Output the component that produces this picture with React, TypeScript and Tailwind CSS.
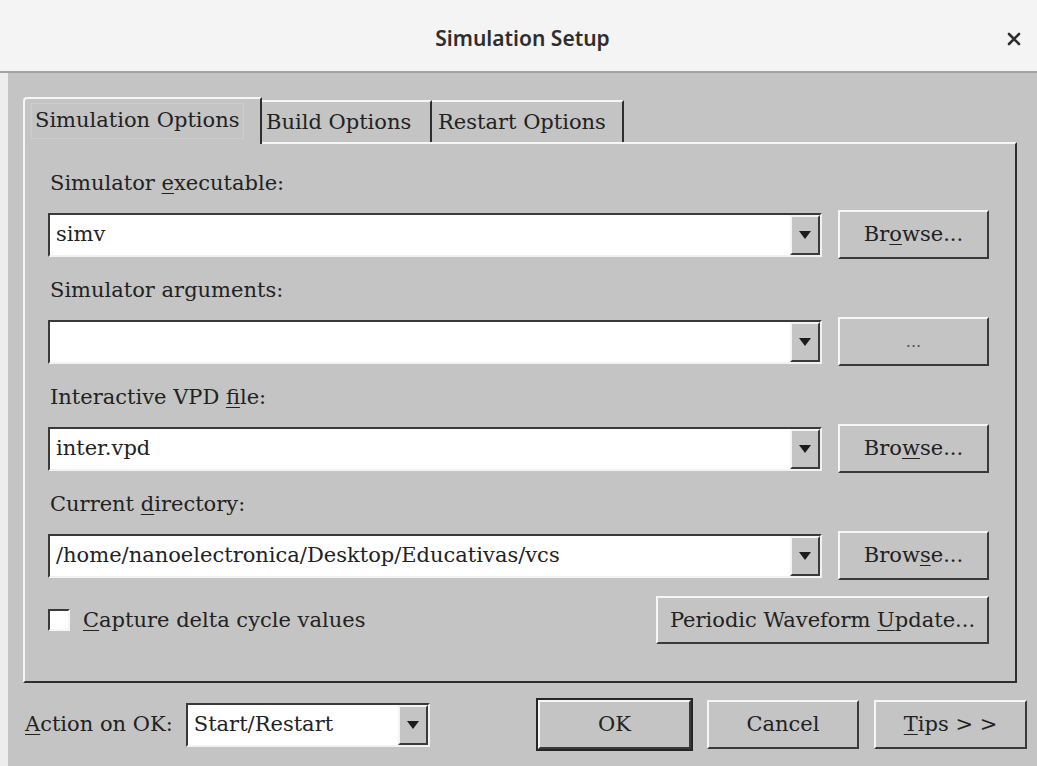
import React from "react";

const serif = "font-['DejaVu_Serif',serif] text-[21px] leading-none text-[#222]";

function Arrow() {
  return (
    <svg width="12" height="8" viewBox="0 0 12 8" aria-hidden>
      <path d="M0 0H12L6 8Z" fill="#1c1c1c" />
    </svg>
  );
}

function Combo({ value, className = "" }: { value: string; className?: string }) {
  return (
    <div
      className={`flex h-[44px] border-2 border-t-[#3a3a3a] border-l-[#3a3a3a] border-b-[#f2f2f2] border-r-[#f2f2f2] ${className}`}
    >
      <div className="flex flex-1 items-center bg-white pl-[6px] whitespace-nowrap overflow-hidden">
        {value}
      </div>
      <div className="flex w-[30px] items-center justify-center border-2 border-t-[#f4f4f4] border-l-[#f4f4f4] border-b-[#3a3a3a] border-r-[#3a3a3a] bg-[#c4c4c4]">
        <Arrow />
      </div>
    </div>
  );
}

function Button({
  children,
  className = "",
  isDefault = false,
}: {
  children: React.ReactNode;
  className?: string;
  isDefault?: boolean;
}) {
  const face = (
    <div className="flex h-full w-full items-center justify-center border-2 border-t-[#f6f6f6] border-l-[#f6f6f6] border-b-[#3a3a3a] border-r-[#3a3a3a] bg-[#c4c4c4]">
      {children}
    </div>
  );
  if (isDefault) {
    return <div className={`border-2 border-[#262626] ${className}`}>{face}</div>;
  }
  return <div className={className}>{face}</div>;
}

function U({ children }: { children: React.ReactNode }) {
  return <span className="underline underline-offset-[3px] decoration-1">{children}</span>;
}

function Field({
  label,
  value,
  action,
}: {
  label: React.ReactNode;
  value: string;
  action: React.ReactNode;
}) {
  return (
    <div className="flex flex-col">
      <div className="flex h-[30px] items-center pl-[2px]">{label}</div>
      <div className="mt-[12px] flex h-[49px] items-center gap-[16px]">
        <Combo value={value} className="flex-1" />
        <Button className="h-[49px] w-[151px]">{action}</Button>
      </div>
    </div>
  );
}

export default function App() {
  return (
    <div className={`flex h-[766px] w-[1037px] flex-col overflow-hidden bg-[#c4c4c4] ${serif}`}>
      {/* window title bar */}
      <div className="flex h-[73px] items-center border-b-2 border-[#a2a2a2] bg-[#f4f4f5] pt-[6px] font-['Noto_Sans',sans-serif] text-[#2e2e2e]">
        <div className="flex-1" />
        <div className="ml-[24px] text-[21px] font-semibold">Simulation Setup</div>
        <div className="flex flex-1 justify-end pr-[16px]">
          <svg width="14" height="14" viewBox="0 0 14 14" aria-hidden>
            <path d="M2 2L12 12M12 2L2 12" stroke="#2e2e2e" strokeWidth="2.6" strokeLinecap="round" />
          </svg>
        </div>
      </div>

      <div className="flex flex-1">
        <div className="w-[8px] bg-[#ededed]" />
        <div className="flex flex-1 flex-col pl-[15px] pt-[24px]">
          {/* tabs */}
          <div className="relative z-10 flex h-[47px] items-start">
            <div className="flex h-[47px] w-[239px] items-center rounded-tl-[4px] border-t-2 border-l-2 border-r-2 border-t-[#f6f6f6] border-l-[#f6f6f6] border-r-[#2e2e2e] bg-[#c4c4c4] px-[6px] pb-[2px]">
              <div className="flex h-[36px] items-center border border-dotted border-[#d6d6d6] px-[3px]">
                Simulation Options
              </div>
            </div>
            <div className="mt-[3px] flex h-[42px] w-[170px] items-center border-t-2 border-r-2 border-t-[#f6f6f6] border-r-[#2e2e2e] pl-[4px]">
              Build Options
            </div>
            <div className="mt-[3px] flex h-[42px] w-[192px] items-center border-t-2 border-r-2 border-t-[#f6f6f6] border-r-[#2e2e2e] pl-[6px]">
              Restart Options
            </div>
          </div>

          {/* tab page */}
          <div className="mr-[20px] -mt-[2px] flex h-[541px] flex-col border-2 border-t-[#f6f6f6] border-l-[#f6f6f6] border-b-[#2e2e2e] border-r-[#2e2e2e] pl-[23px] pr-[26px] pt-[24px]">
            <div className="flex flex-col gap-[16px]">
              <Field
                label={
                  <span>
                    Simulator <U>e</U>xecutable:
                  </span>
                }
                value="simv"
                action={
                  <span>
                    Br<U>o</U>wse...
                  </span>
                }
              />
              <Field
                label={<span>Simulator arguments:</span>}
                value=""
                action={<span className="text-[16px] text-[#555]">...</span>}
              />
              <Field
                label={
                  <span>
                    Interactive VPD <U>f</U>ile:
                  </span>
                }
                value="inter.vpd"
                action={
                  <span>
                    Bro<U>w</U>se...
                  </span>
                }
              />
              <Field
                label={
                  <span>
                    Current <U>d</U>irectory:
                  </span>
                }
                value="/home/nanoelectronica/Desktop/Educativas/vcs"
                action={
                  <span>
                    Brow<U>s</U>e...
                  </span>
                }
              />
            </div>

            <div className="mt-[16px] flex h-[48px] items-center">
              <div className="h-[22px] w-[22px] border-2 border-t-[#3a3a3a] border-l-[#3a3a3a] border-b-[#f6f6f6] border-r-[#f6f6f6] bg-white" />
              <span className="ml-[13px]">
                <U>C</U>apture delta cycle values
              </span>
              <div className="flex-1" />
              <Button className="h-[48px] w-[333px]">
                <span>
                  Periodic Waveform <U>U</U>pdate...
                </span>
              </Button>
            </div>
          </div>

          {/* dialog actions */}
          <div className="mr-[10px] flex flex-1 items-center">
            <span className="pl-[2px]">
              <U>A</U>ction on OK:
            </span>
            <Combo value="Start/Restart" className="ml-[13px] w-[244px]" />
            <div className="flex-1" />
            <Button isDefault className="h-[53px] w-[157px]">
              OK
            </Button>
            <Button className="ml-[14px] h-[49px] w-[152px]">Cancel</Button>
            <Button className="ml-[15px] h-[49px] w-[153px]">
              <span>
                <U>T</U>ips &gt; &gt;
              </span>
            </Button>
          </div>
        </div>
      </div>
    </div>
  );
}
